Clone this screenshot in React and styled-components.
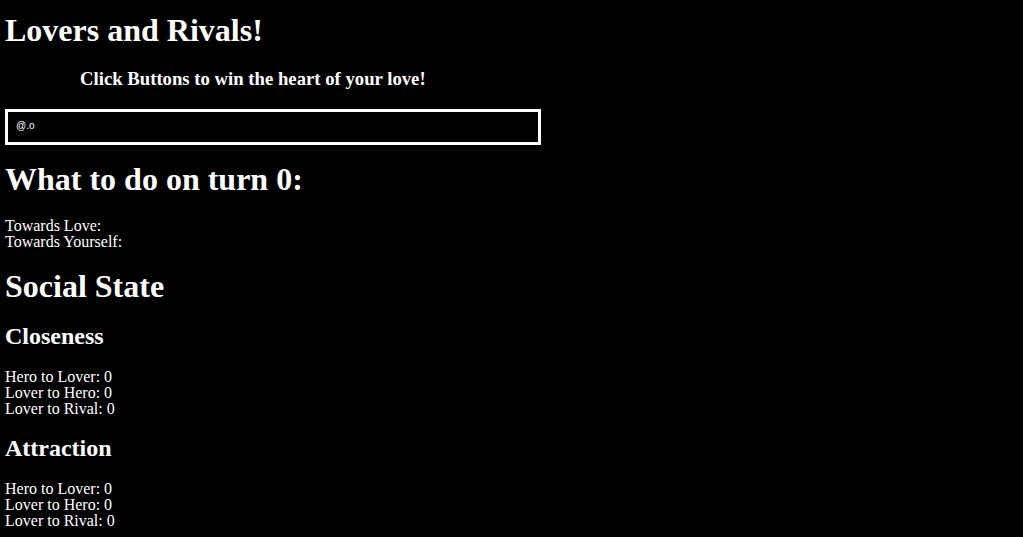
import React from 'react';
import styled, { createGlobalStyle } from 'styled-components';

const GlobalStyle = createGlobalStyle`
  html, body {
    margin: 0;
    padding: 0;
    background: black;
  }
  body {
    color: white;
    font-family: "Liberation Serif", "Times New Roman", serif;
  }
`;

const Page = styled.main`
  display: flex;
  flex-direction: column;
  align-items: flex-start;
  padding: 12px 5px 0 5px;
  min-height: 537px;
  box-sizing: border-box;
`;

const Title = styled.h1`
  font-size: 32px;
  line-height: 37px;
  font-weight: bold;
  margin: ${p => p.$top || 0}px 0 0 0;
`;

const Subtitle = styled.h3`
  font-size: 18.72px;
  line-height: 22px;
  font-weight: bold;
  margin: 19px 0 0 75px;
`;

const Console = styled.div`
  box-sizing: border-box;
  width: 536px;
  height: 36px;
  margin-top: 19px;
  border: 3px solid white;
  padding: 8px 0 0 8px;
  font-family: "Liberation Sans", Arial, sans-serif;
  font-size: 10px;
  line-height: 12px;
`;

const Section = styled.h2`
  font-size: 24px;
  line-height: 28px;
  font-weight: bold;
  margin: ${p => p.$top || 0}px 0 0 0;
`;

const Lines = styled.div`
  margin-top: ${p => p.$top || 0}px;
  font-size: 16px;
  line-height: 16px;
`;

const Line = styled.div``;

const relations = ['Hero to Lover', 'Lover to Hero', 'Lover to Rival'];

export default function App() {
  const closeness = { 'Hero to Lover': 0, 'Lover to Hero': 0, 'Lover to Rival': 0 };
  const attraction = { 'Hero to Lover': 0, 'Lover to Hero': 0, 'Lover to Rival': 0 };
  const turn = 0;

  return (
    <>
      <GlobalStyle />
      <Page>
        <Title>Lovers and Rivals!</Title>
        <Subtitle>Click Buttons to win the heart of your love!</Subtitle>
        <Console>@.o</Console>
        <Title $top={16}>What to do on turn {turn}:</Title>
        <Lines $top={20}>
          <Line>Towards Love:</Line>
          <Line>Towards Yourself:</Line>
        </Lines>
        <Title $top={18}>Social State</Title>
        <Section $top={17}>Closeness</Section>
        <Lines $top={19}>
          {relations.map(r => <Line key={r}>{r}: {closeness[r]}</Line>)}
        </Lines>
        <Section $top={17}>Attraction</Section>
        <Lines $top={19}>
          {relations.map(r => <Line key={r}>{r}: {attraction[r]}</Line>)}
        </Lines>
      </Page>
    </>
  );
}
